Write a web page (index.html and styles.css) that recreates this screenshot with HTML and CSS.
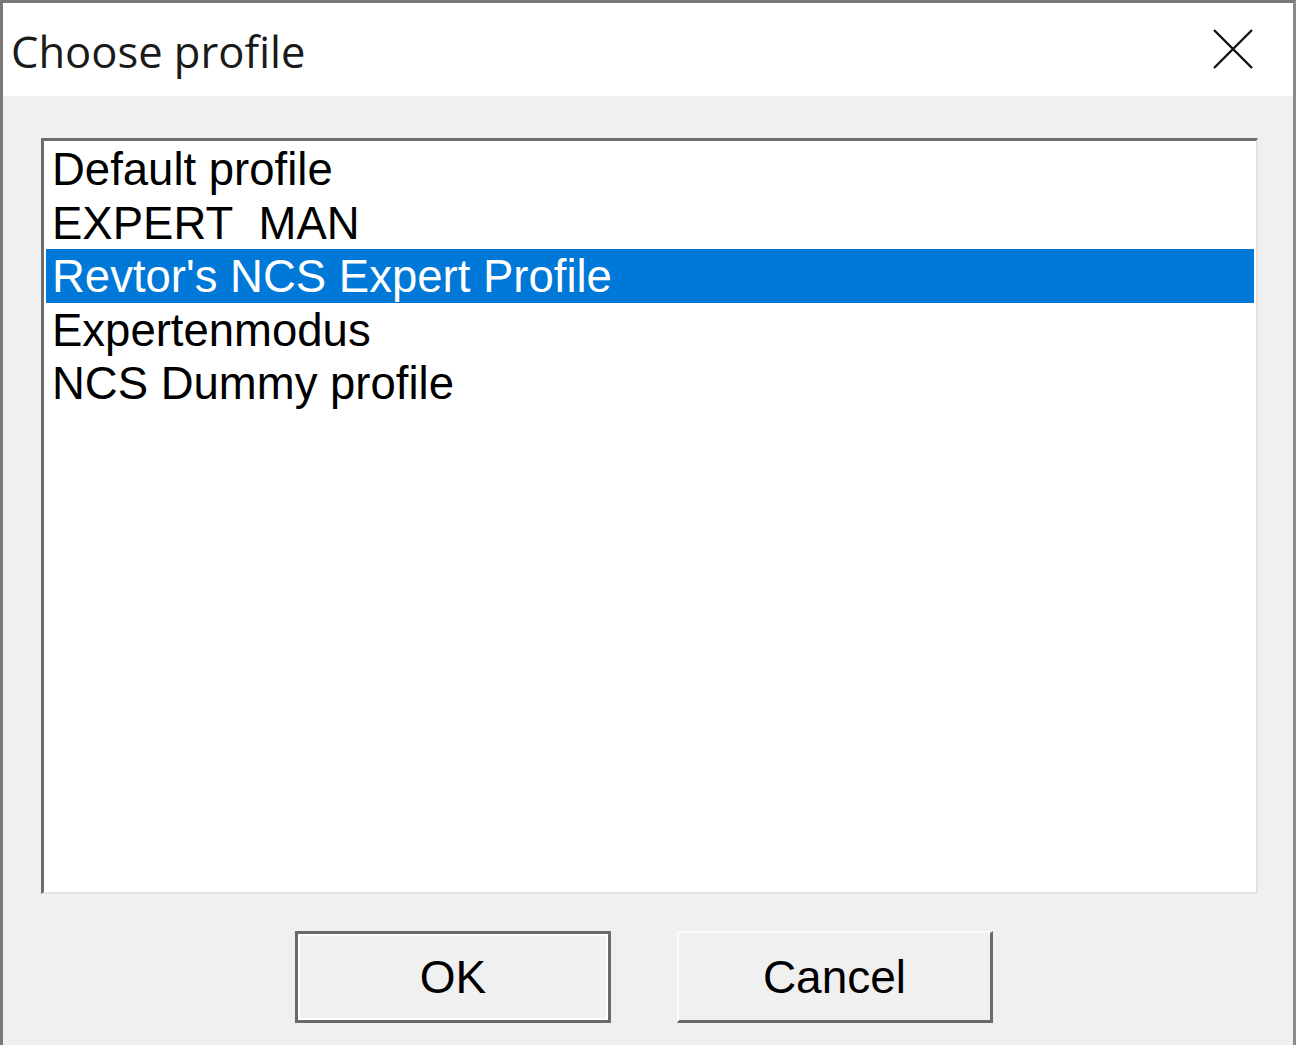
FILE: index.html
```html
<!DOCTYPE html>
<html lang="en">
<head>
    <meta charset="UTF-8">
    <title>Choose profile</title>
    <link rel="stylesheet" href="styles.css">
</head>
<body>
    <div class="window">
        <div class="titlebar">
            <span class="title">Choose profile</span>
            <svg class="close" width="40" height="40" viewBox="0 0 40 40">
                <path d="M1 1 L39 39 M39 1 L1 39" stroke="#111" stroke-width="2.4" fill="none"/>
            </svg>
        </div>
        <div class="content">
            <ul class="listbox">
                <li>Default profile</li>
                <li>EXPERT&nbsp; MAN</li>
                <li class="selected">Revtor's NCS Expert Profile</li>
                <li>Expertenmodus</li>
                <li>NCS Dummy profile</li>
            </ul>
            <div class="buttons">
                <button class="default">OK</button>
                <button>Cancel</button>
            </div>
        </div>
    </div>
</body>
</html>
```

FILE: styles.css
```css
html, body { margin: 0; padding: 0; }
body { background-color: #f0f0f0; font-family: "Liberation Sans", Arial, sans-serif; }

.window {
    width: 1296px;
    height: 1045px;
    box-sizing: border-box;
    border-top: 3px solid #7a7a7a;
    border-left: 3px solid #7a7a7a;
    border-right: 3px solid #8a8a8a;
    background-color: #f0f0f0;
    display: flex;
    flex-direction: column;
}

.titlebar {
    height: 93px;
    box-sizing: border-box;
    background-color: #fff;
    display: flex;
    align-items: center;
    justify-content: space-between;
    padding: 0 40px 0 8px;
}
.title {
    font-family: "Open Sans", "Noto Sans", sans-serif;
    font-size: 43.5px;
    color: #1a1a1a;
    margin-top: 4px;
}
.close { margin-top: -2px; }

.content { padding: 42px 35px 0 38px; }

.listbox {
    list-style: none;
    margin: 0;
    padding: 1px 2px;
    height: 756px;
    box-sizing: border-box;
    background-color: #fff;
    border-top: 3px solid #6d6d6d;
    border-left: 3px solid #6d6d6d;
    border-right: 2px solid #e2e2e2;
    border-bottom: 2px solid #e2e2e2;
    font-size: 45.5px;
    color: #000;
}
.listbox li {
    height: 50.5px;
    line-height: 50.5px;
    padding: 3px 0 0 6px;
    white-space: pre;
}
.listbox li.selected { background-color: #0078d7; color: #fff; }

.buttons {
    display: flex;
    justify-content: center;
    gap: 66px;
    margin-top: 37px;
    padding-right: 11px;
}
button {
    width: 316px;
    height: 92px;
    box-sizing: border-box;
    font-family: "Liberation Sans", Arial, sans-serif;
    font-size: 46px;
    color: #000;
    background-color: #f0f0f0;
    border-top: 2px solid #fafafa;
    border-left: 2px solid #fafafa;
    border-right: 3px solid #6a6a6a;
    border-bottom: 3px solid #6a6a6a;
    padding: 0;
}
button.default {
    border: 3px solid #6a6a6a;
    box-shadow: inset 2px 2px 0 #fff, inset -2px -2px 0 #fff;
}
```
